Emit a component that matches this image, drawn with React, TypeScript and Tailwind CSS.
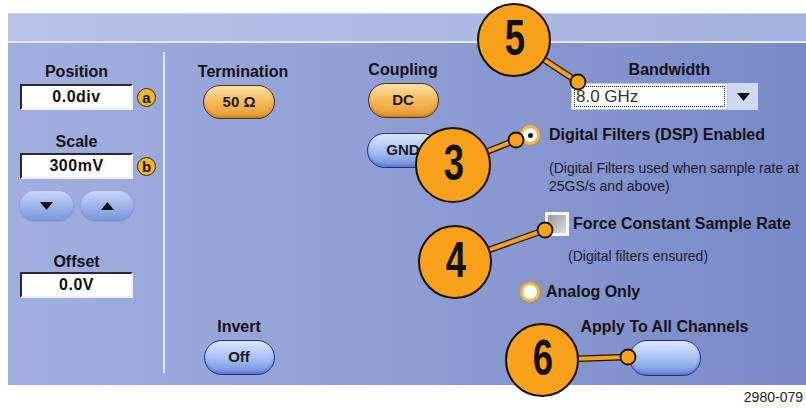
import React from "react";

const orangePill =
  "flex items-center justify-center rounded-full border border-[#4a3210] bg-linear-to-b from-[#fde0a4] via-[#f6b95a] to-[#e8982c] text-[15px] font-bold text-[#1a1a1a] shadow-[inset_0_-2px_3px_rgba(120,60,0,0.25)]";
const bluePill =
  "flex items-center justify-center rounded-full border-[1.5px] border-[#22308a] bg-linear-to-b from-[#dce7fd] via-[#a9c1f3] to-[#6f8fdc] text-[15px] font-bold text-[#1a1a1a] shadow-[inset_0_-2px_3px_rgba(20,40,120,0.25)]";
const arrowPill =
  "flex h-[29px] items-center justify-center rounded-full bg-linear-to-b from-[#c6d6f6] to-[#7a96dc] shadow-[0_1px_2px_rgba(40,60,130,0.4)]";

const ValueBox = ({ value }: { value: string }) => (
  <div className="flex h-[26px] w-[113px] items-center justify-center border-2 border-t-[#2a2a2a] border-l-[#2a2a2a] border-r-[#eef0f6] border-b-[#eef0f6] bg-white text-[16px] font-bold tracking-[0.5px] text-[#111]">
    {value}
  </div>
);

const Badge = ({ letter }: { letter: string }) => (
  <div className="flex h-[19px] w-[19px] items-center justify-center rounded-full border border-[#3d2c00] bg-[#f3b425] text-[15px] font-bold leading-none text-[#111]">
    {letter}
  </div>
);

const Label = ({ children, className = "" }: { children: React.ReactNode; className?: string }) => (
  <div className={`h-[16px] text-[16px] font-bold leading-[16px] text-[#141414] ${className}`}>{children}</div>
);

const Tri = ({ up }: { up?: boolean }) => (
  <svg width={13} height={8} viewBox="0 0 13 8">
    <polygon points={up ? "6.5,0 13,8 0,8" : "0,0 13,0 6.5,8"} fill="#111" />
  </svg>
);

// callouts: circle center, radius, number, dot it points at
const callouts = [
  { n: "5", cx: 514, cy: 40, r: 36, dx: 578, dy: 82 },
  { n: "3", cx: 453, cy: 165, r: 37, dx: 516, dy: 140 },
  { n: "4", cx: 455, cy: 262, r: 36, dx: 545, dy: 230 },
  { n: "6", cx: 542, cy: 360, r: 36, dx: 628, dy: 357 },
];

const Callouts = () => (
  <svg className="pointer-events-none absolute left-0 top-0" width={806} height={408} viewBox="0 0 806 408">
    {callouts.map((c) => (
      <g key={"l" + c.n}>
        <line x1={c.cx} y1={c.cy} x2={c.dx} y2={c.dy} stroke="#1a1200" strokeWidth={6.5} />
        <line x1={c.cx} y1={c.cy} x2={c.dx} y2={c.dy} stroke="#f9a11b" strokeWidth={4} />
      </g>
    ))}
    {callouts.map((c) => (
      <g key={"c" + c.n}>
        <circle cx={c.cx} cy={c.cy} r={c.r} fill="#f9a11b" stroke="#1a1200" strokeWidth={2} />
        <circle cx={c.dx} cy={c.dy} r={7.5} fill="#f9a11b" stroke="#1a1200" strokeWidth={1.8} />
        <text
          transform={`translate(${c.cx + 1} ${c.cy + 15}) scale(0.76 1.05)`}
          textAnchor="middle"
          fontFamily="'Liberation Sans', Arial, sans-serif"
          fontWeight="bold"
          fontSize={48}
          fill="#111"
        >
          {c.n}
        </text>
      </g>
    ))}
  </svg>
);

export default function App() {
  return (
    <div className="relative h-[408px] w-[806px] overflow-hidden bg-white pl-[8px] pt-[13px] font-['Liberation_Sans',Arial,sans-serif]">
      <div className="flex flex-col">
        {/* top band */}
        <div className="h-[30px] border-t border-b-2 border-t-[#c9d3ef] border-b-[#e4eaf9] bg-linear-to-r from-[#b7c3e7] to-[#a3b1de]" />

        {/* main area */}
        <div className="flex h-[342px] bg-linear-to-r from-[#a1afe0] via-[#8d9dd4] to-[#788ac7]">
          {/* left column */}
          <div className="w-[157px] shrink-0 pb-[12px] pt-[9px]">
            <div className="flex h-full flex-col border-r-2 border-[#dfe5f7] pl-[12px] pt-[12px]">
              <Label className="w-[113px] text-center">Position</Label>
              <div className="mt-[4px] flex items-center gap-[4px]">
                <ValueBox value="0.0div" />
                <Badge letter="a" />
              </div>
              <Label className="mt-[24px] w-[113px] text-center">Scale</Label>
              <div className="mt-[3px] flex items-center gap-[4px]">
                <ValueBox value="300mV" />
                <Badge letter="b" />
              </div>
              <div className="mt-[12px] flex w-[113px] justify-between">
                <div className={`${arrowPill} w-[53px]`}>
                  <Tri />
                </div>
                <div className={`${arrowPill} w-[52px]`}>
                  <Tri up />
                </div>
              </div>
              <Label className="mt-[34px] w-[113px] text-center">Offset</Label>
              <div className="mt-[2px]">
                <ValueBox value="0.0V" />
              </div>
            </div>
          </div>

          {/* termination / invert */}
          <div className="flex w-[148px] shrink-0 flex-col items-center justify-between pb-[10px] pt-[21px]">
            <div className="flex flex-col items-center">
              <Label className="pl-[8px]">Termination</Label>
              <div className={`${orangePill} mt-[5px] h-[34px] w-[72px]`}>50 Ω</div>
            </div>
            <div className="flex flex-col items-center">
              <Label>Invert</Label>
              <div className={`${bluePill} mt-[5px] h-[35px] w-[71px]`}>Off</div>
            </div>
          </div>

          {/* coupling */}
          <div className="flex w-[180px] shrink-0 flex-col items-center pt-[19px]">
            <Label>Coupling</Label>
            <div className={`${orangePill} mt-[5px] h-[35px] w-[71px]`}>DC</div>
            <div className={`${bluePill} mt-[15px] h-[35px] w-[73px]`}>GND</div>
          </div>

          {/* bandwidth / filters */}
          <div className="flex flex-1 flex-col pl-[20px] pt-[19px] text-[#141414]">
            <div className="ml-[58px] w-[187px]">
              <Label className="pl-[10px] text-center">Bandwidth</Label>
              <div className="mt-[5px] flex h-[27px]">
                <div className="w-[157px] border border-[#b9c6ee] bg-white p-[2px]">
                  <div className="flex h-full items-center border border-dotted border-[#222] pl-[1px] text-[17px] leading-none text-[#333]">
                    8.0 GHz
                  </div>
                </div>
                <div className="flex w-[30px] items-center justify-center bg-[#cdd8f4]">
                  <Tri />
                </div>
              </div>
            </div>

            <div className="mt-[14px] flex h-[22px] items-center">
              <div className="ml-[7px] flex h-[20px] w-[20px] items-center justify-center rounded-full border-[3px] border-[#f3b54c] bg-white shadow-[0_0_3px_#d98a14]">
                <div className="h-[5px] w-[5px] rounded-full bg-[#111]" />
              </div>
              <span className="ml-[9px] text-[16px] font-bold">Digital Filters (DSP) Enabled</span>
            </div>

            <p className="ml-[36px] mt-[13px] text-[14px] leading-[18px] text-[#1c1c2c]">
              (Digital Filters used when sample rate at
              <br />
              25GS/s and above)
            </p>

            <div className="mt-[17px] flex h-[24px] items-center">
              <div className="ml-[32px] h-[24px] w-[24px] border-[3px] border-[#f4f6fc] bg-linear-to-br from-[#999] to-[#dedede]" />
              <span className="ml-[4px] text-[16px] font-bold">Force Constant Sample Rate</span>
            </div>

            <div className="ml-[55px] mt-[11px] text-[14px] leading-[18px] text-[#1c1c2c]">(Digital filters ensured)</div>

            <div className="mt-[16px] flex h-[22px] items-center">
              <div className="ml-[7px] h-[20px] w-[20px] rounded-full border-[3px] border-[#f3b54c] bg-white shadow-[0_0_3px_#d98a14]" />
              <span className="ml-[6px] text-[16px] font-bold">Analog Only</span>
            </div>

            <div className="ml-[58px] mt-[16px] flex w-[187px] flex-col items-center">
              <Label>Apply To All Channels</Label>
              <div className={`${bluePill} mt-[5px] h-[36px] w-[72px]`} />
            </div>
          </div>
        </div>

        <div className="mt-[4px] pr-[3px] text-right text-[14px] leading-[16px] text-[#222]">2980-079</div>
      </div>

      <Callouts />
    </div>
  );
}
